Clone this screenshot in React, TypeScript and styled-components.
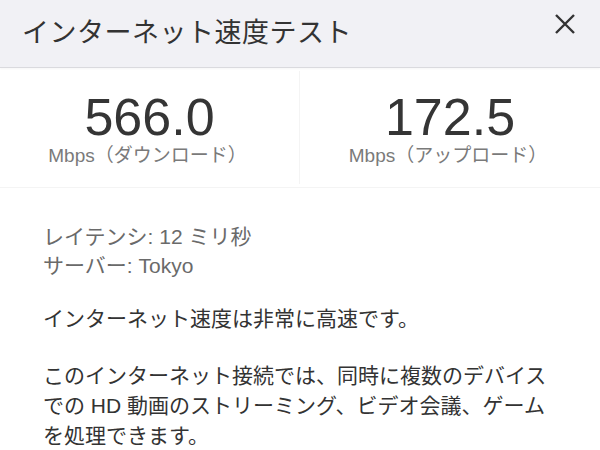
import styled, { createGlobalStyle } from "styled-components";

const GlobalStyle = createGlobalStyle`
	html, body {
		margin: 0;
		padding: 0;
		background: #ffffff;
	}
	body {
		font-family: "Liberation Sans", "Noto Sans CJK JP", sans-serif;
	}
`;

const Panel = styled.div`
	width: 600px;
	height: 450px;
	overflow: hidden;
	background: #ffffff;
`;

const Header = styled.div`
	height: 68px;
	display: flex;
	align-items: center;
	justify-content: space-between;
	padding: 0 23px 0 22px;
	box-sizing: border-box;
	background: #f1f1f5;
	border-bottom: 1px solid #dadade;
	box-shadow: 0 1px 2px rgba(0, 0, 0, 0.04);
`;

const Title = styled.h1`
	margin: 0;
	font-size: 27px;
	font-weight: 400;
	letter-spacing: 0.5px;
	color: #333333;
	line-height: 1;
`;

const CloseButton = styled.button`
	border: none;
	background: none;
	padding: 0;
	width: 24px;
	height: 24px;
	display: flex;
	align-items: center;
	justify-content: center;
	cursor: pointer;
	margin-top: -20px;
`;

const Stats = styled.div`
	display: grid;
	grid-template-columns: 1fr 1fr;
	height: 119px;
	border-bottom: 1px solid #f4f4f4;
`;

const Stat = styled.div<{ divider?: boolean }>`
	display: flex;
	flex-direction: column;
	align-items: center;
	padding-top: 23px;
	border-right: ${(props) => (props.divider ? "1px solid #f4f4f4" : "none")};
	margin: 3px 0;
`;

const Value = styled.div`
	font-size: 52px;
	line-height: 52px;
	color: #353535;
	margin-top: -3px;
`;

const Unit = styled.div`
	font-size: 19px;
	line-height: 20px;
	color: #7a7a7a;
	margin-top: 3px;
	margin-left: -4px;
`;

const Body = styled.div`
	padding: 34px 43px 0 43px;
	font-size: 21px;
`;

const Meta = styled.div`
	line-height: 29px;
	color: #6a6a6a;
`;

const Para = styled.p<{ gap: number }>`
	margin: ${(props) => props.gap}px 0 0 0;
	line-height: 30px;
	color: #333333;
`;

function CloseIcon() {
	return (
		<svg width="22" height="20" viewBox="0 0 22 20">
			<path
				d="M2 1 L20 19 M20 1 L2 19"
				stroke="#333"
				strokeWidth="2.4"
				fill="none"
			/>
		</svg>
	);
}

function App() {
	return (
		<>
			<GlobalStyle />
			<Panel>
				<Header>
					<Title>インターネット速度テスト</Title>
					<CloseButton aria-label="閉じる">
						<CloseIcon />
					</CloseButton>
				</Header>
				<Stats>
					<Stat divider>
						<Value>566.0</Value>
						<Unit>Mbps（ダウンロード）</Unit>
					</Stat>
					<Stat>
						<Value>172.5</Value>
						<Unit>Mbps（アップロード）</Unit>
					</Stat>
				</Stats>
				<Body>
					<Meta>レイテンシ: 12 ミリ秒</Meta>
					<Meta>サーバー: Tokyo</Meta>
					<Para gap={24}>インターネット速度は非常に高速です。</Para>
					<Para gap={27}>
						このインターネット接続では、同時に複数のデバイスでの HD 動画のストリーミング、ビデオ会議、ゲームを処理できます。
					</Para>
				</Body>
			</Panel>
		</>
	);
}

export default App;
